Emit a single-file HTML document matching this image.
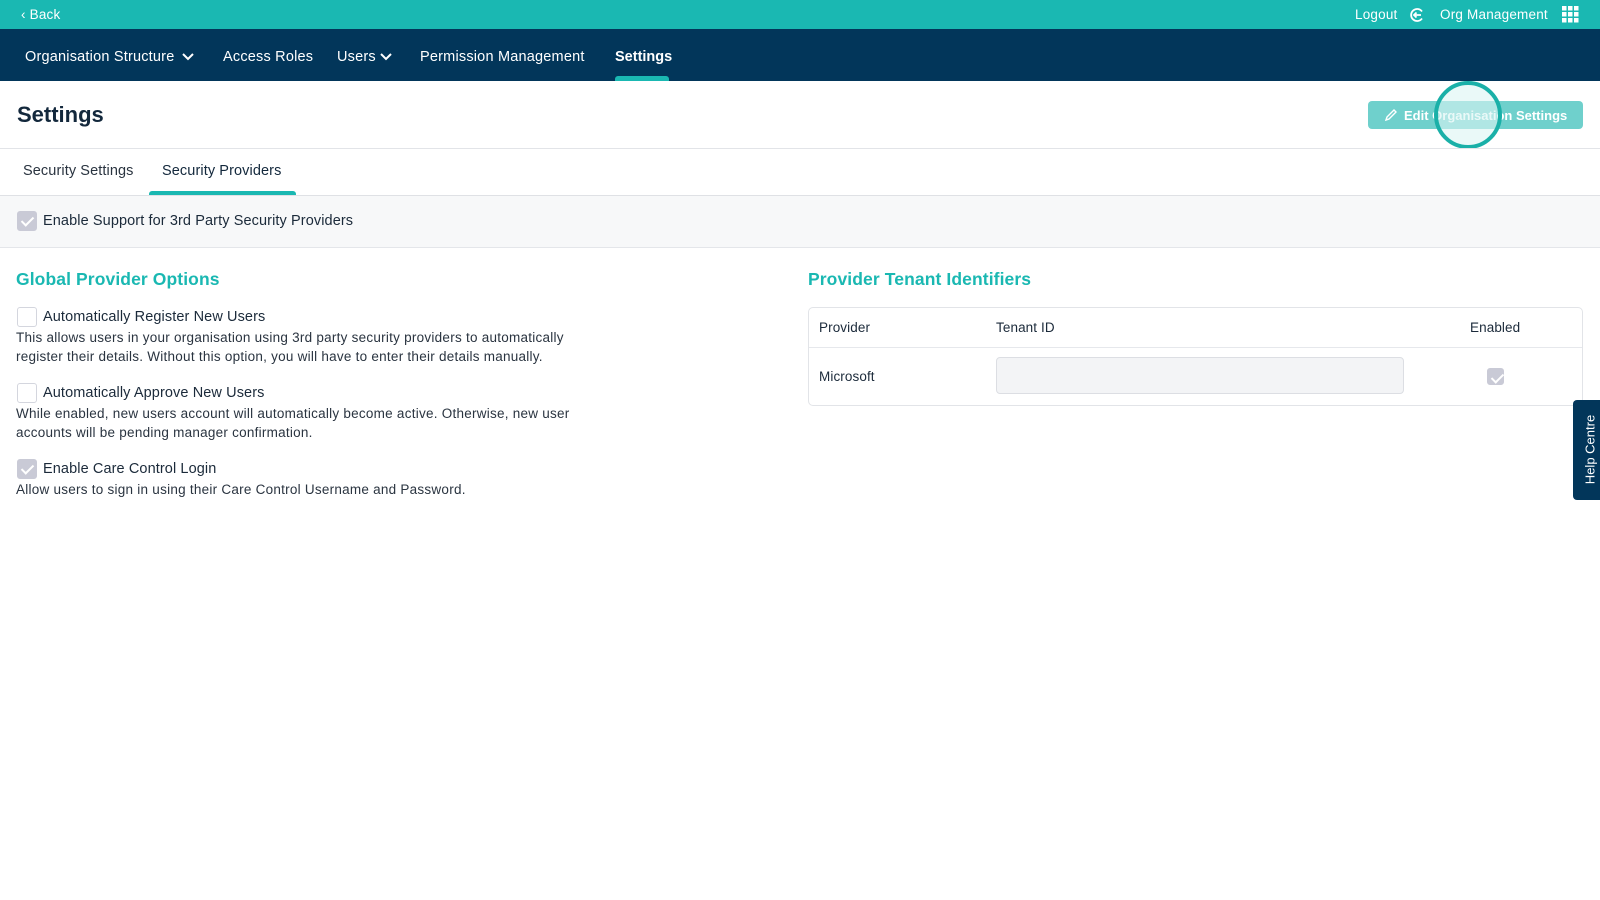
<!DOCTYPE html>
<html><head><style>
*{box-sizing:border-box;margin:0;padding:0}
body{width:1600px;height:900px;overflow:hidden;background:#fff;font-family:"Liberation Sans",sans-serif;color:#1b2a3a;position:relative}
.a{position:absolute;white-space:nowrap}
.top{left:0;top:0;width:1600px;height:29px;background:#1ab8b2}
.nav{left:0;top:29px;width:1600px;height:52px;background:#02365a}
.w{color:#fff;font-size:14px;letter-spacing:.2px}
.navi{color:#fff;font-size:14.5px;top:49px;letter-spacing:.2px}
.cb{width:20px;height:20px;border-radius:3px;border:1px solid #d4d6de;background:#fff}
.cb.on{background:#c9cad6;border-color:#c9cad6}
.cb.on:after{content:"";position:absolute;left:6px;top:2px;width:5px;height:10px;border:solid #fff;border-width:0 2px 2px 0;transform:rotate(45deg)}
.lbl{font-size:14.5px;color:#1b2a3a;letter-spacing:.1px}
.desc{font-size:13.5px;color:#2a3440;line-height:19px;letter-spacing:.25px}
.h2{font-size:17.5px;font-weight:bold;color:#1ab8b2;letter-spacing:.1px}
</style></head><body>
<div class="a top"></div>
<div class="a w" style="left:21px;top:7px;font-size:13.5px">‹ Back</div>
<div class="a w" style="left:1355px;top:7px;font-size:13.5px">Logout</div>
<svg class="a" style="left:1409px;top:7px" width="16" height="16" viewBox="0 0 16 16"><path d="M13 4.5A6 6 0 1 0 13 11.5" stroke="#fff" stroke-width="1.8" fill="none"/><path d="M12 8H5M7.5 5.5L5 8l2.5 2.5" stroke="#fff" stroke-width="1.8" fill="none"/></svg>
<div class="a w" style="left:1440px;top:7px;font-size:13.5px">Org Management</div>
<svg class="a" style="left:1562px;top:6px" width="17" height="17"><g fill="#fff"><rect x="0" y="0" width="4.5" height="4.5"/><rect x="6" y="0" width="4.5" height="4.5"/><rect x="12" y="0" width="4.5" height="4.5"/><rect x="0" y="6" width="4.5" height="4.5"/><rect x="6" y="6" width="4.5" height="4.5"/><rect x="12" y="6" width="4.5" height="4.5"/><rect x="0" y="12" width="4.5" height="4.5"/><rect x="6" y="12" width="4.5" height="4.5"/><rect x="12" y="12" width="4.5" height="4.5"/></g></svg>
<div class="a nav"></div>
<div class="a navi" style="left:25px">Organisation Structure</div>
<svg class="a" style="left:182px;top:53px" width="12" height="8"><path d="M1 1l5 5 5-5" stroke="#fff" stroke-width="2" fill="none"/></svg>
<div class="a navi" style="left:223px">Access Roles</div>
<div class="a navi" style="left:337px">Users</div>
<svg class="a" style="left:380px;top:53px" width="12" height="8"><path d="M1 1l5 5 5-5" stroke="#fff" stroke-width="2" fill="none"/></svg>
<div class="a navi" style="left:420px">Permission Management</div>
<div class="a navi" style="left:615px;font-weight:bold;letter-spacing:0">Settings</div>
<div class="a" style="left:615px;top:76px;width:54px;height:5px;background:#1ab8b2;border-radius:3px 3px 0 0"></div>
<div class="a" style="left:17px;top:102px;font-size:22px;font-weight:bold;color:#13283c">Settings</div>
<div class="a" style="left:1368px;top:101px;width:215px;height:28px;background:#6fd0cc;border-radius:4px;color:#fff;font-size:13px;font-weight:bold;padding:7px 0 0 36px">Edit Organisation Settings</div>
<svg class="a" style="left:1384px;top:108px" width="14" height="14"><path d="M2 12l1-3 7-7 2 2-7 7z" stroke="#fff" stroke-width="1.4" fill="none"/></svg>
<div class="a" style="left:1434px;top:81px;width:68px;height:68px;border-radius:50%;border:4px solid #1ab0a8;background:rgba(220,245,244,.6)"></div>
<div class="a" style="left:0;top:148px;width:1600px;height:1px;background:#e2e4e8"></div>
<div class="a" style="left:23px;top:163px;font-size:14.5px;color:#2a3440;letter-spacing:.1px">Security Settings</div>
<div class="a" style="left:162px;top:163px;font-size:14.5px;color:#13283c;letter-spacing:.1px">Security Providers</div>
<div class="a" style="left:149px;top:191px;width:147px;height:5px;background:#1ab8b2;border-radius:3px 3px 0 0"></div>
<div class="a" style="left:0;top:195px;width:1600px;height:53px;background:#f7f8f9;border-top:1px solid #dfe1e5;border-bottom:1px solid #e4e6ea"></div>
<div class="a cb on" style="left:17px;top:211px"></div>
<div class="a lbl" style="left:43px;top:213px">Enable Support for 3rd Party Security Providers</div>
<div class="a h2" style="left:16px;top:269px">Global Provider Options</div>
<div class="a cb" style="left:17px;top:307px"></div>
<div class="a lbl" style="left:43px;top:309px">Automatically Register New Users</div>
<div class="a desc" style="left:16px;top:328px">This allows users in your organisation using 3rd party security providers to automatically<br>register their details. Without this option, you will have to enter their details manually.</div>
<div class="a cb" style="left:17px;top:383px"></div>
<div class="a lbl" style="left:43px;top:385px">Automatically Approve New Users</div>
<div class="a desc" style="left:16px;top:404px">While enabled, new users account will automatically become active. Otherwise, new user<br>accounts will be pending manager confirmation.</div>
<div class="a cb on" style="left:17px;top:459px"></div>
<div class="a lbl" style="left:43px;top:461px">Enable Care Control Login</div>
<div class="a desc" style="left:16px;top:480px">Allow users to sign in using their Care Control Username and Password.</div>
<div class="a h2" style="left:808px;top:269px">Provider Tenant Identifiers</div>
<div class="a" style="left:808px;top:307px;width:775px;height:99px;border:1px solid #e2e4e8;border-radius:5px"></div>
<div class="a" style="left:809px;top:347px;width:773px;height:1px;background:#e6e8ec"></div>
<div class="a lbl" style="left:819px;top:320px;font-size:13.5px">Provider</div>
<div class="a lbl" style="left:996px;top:320px;font-size:13.5px">Tenant ID</div>
<div class="a lbl" style="left:1470px;top:320px;font-size:13.5px">Enabled</div>
<div class="a lbl" style="left:819px;top:369px;font-size:13.5px">Microsoft</div>
<div class="a" style="left:996px;top:357px;width:408px;height:37px;background:#f3f4f6;border:1px solid #dcdee3;border-radius:4px"></div>
<div class="a cb on" style="left:1487px;top:368px;width:17px;height:17px"></div>
<div class="a" style="left:1573px;top:400px;width:30px;height:100px;background:#02365a;border-radius:4px 0 0 4px"></div>
<div class="a" style="left:1540px;top:442px;width:100px;transform:rotate(-90deg);color:#fff;font-size:13px;text-align:center">Help Centre</div>
</body></html>
